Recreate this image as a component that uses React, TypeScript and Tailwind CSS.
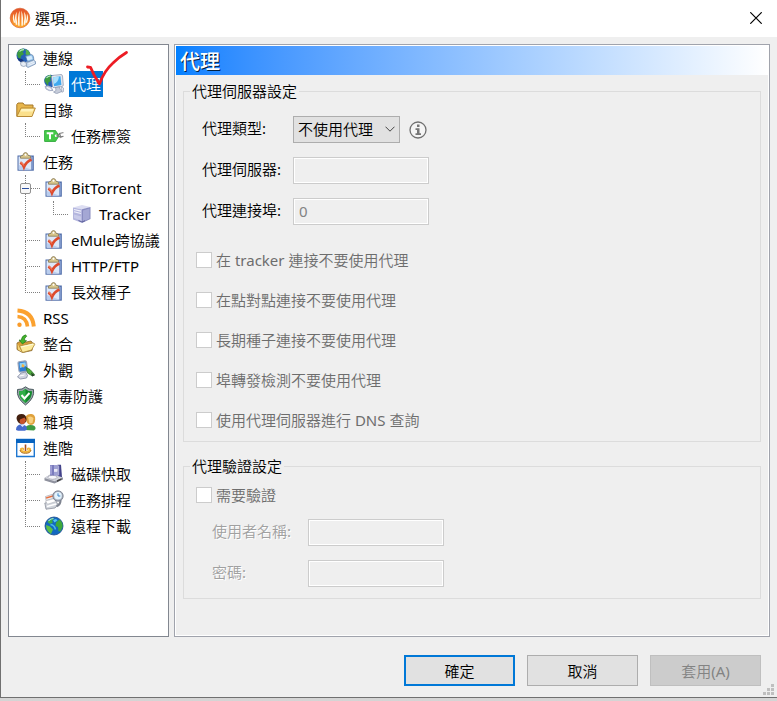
import type { ReactElement, ReactNode } from "react";

const Svg = ({ children }: { children: ReactNode }) => (
  <svg className="block size-5 shrink-0" viewBox="0 0 20 20" aria-hidden="true">
    {children}
  </svg>
);

const NetworkIcon = () => (
  <Svg>
    <circle cx="7.500" cy="7.500" r="7" fill="#2560b8" />
    <path d="M1 6Q2 1 7.500.6L8.500 2 6.500 4 8 6 5 8 4.500 11 2 9.500Z" fill="#3c9b3f" />
    <path d="M9 1q4 1 5.300 5L12 8 9.500 6 10 3.500z" fill="#58b04a" />
    <path d="M3.500 3.500Q5 1.500 8 1.600" stroke="#b8e8c0" strokeWidth="1.200" fill="none" />
    <path d="M1.200 10q2 5 8 4.500L6 11z" fill="#16357c" />
    <path d="M9.500 8l5.500-1.500q2 0 2.500 2.500l.3 3-6 2z" fill="#8fc0ea" stroke="#5c7ea8" strokeWidth=".7" />
    <path d="M10.500 9l5-1.300 1 3.300-5 1.600z" fill="#d3eafb" />
    <path d="M10.500 14.500l7-2.500 2 1.500v2.500l-7.500 3.500-2-1.500z" fill="#c3d6ec" stroke="#6a86ac" strokeWidth=".7" />
    <path d="M12 16l6-2.500M12.500 17.500l6-2.500" stroke="#fff" strokeWidth=".7" />
    <path d="M4.500 14.500q3-2 5.500 0l.5 3q-3 2-5.500 0z" fill="#e6edf6" stroke="#8292aa" strokeWidth=".7" />
  </Svg>
);

const ProxyIcon = () => (
  <Svg>
    <circle cx="6.500" cy="7" r="6.300" fill="#2560b8" />
    <path d="M.6 7Q1 1.500 6.500.8L8 2.500 6 4.500 7 7 4.500 8.500 4 12Z" fill="#3c9b3f" />
    <path d="M2.500 4Q4 2 6.500 1.800" stroke="#b8e8c0" strokeWidth="1.200" fill="none" />
    <path d="M7.500 2.500Q8 1.500 9 1.400L17 .5q1.300 0 1.500 1.500l.8 9q0 1.300-1.300 1.500l-8 1.200q-1.300 0-1.500-1.300z" fill="#e3e6ee" stroke="#8a94ab" strokeWidth=".7" />
    <path d="M9 3.200l7.500-.9.900 8.700-7.400 1.200z" fill="#3fa9ee" />
    <path d="M9 3.200l6-.7q-.5 6-5.300 7.500z" fill="#a9e0fc" />
    <path d="M11.500 13.500l4-.6.8 2.600 2.700 1.500-6.500 2.700-3-1.700 2.500-1.500z" fill="#c6ccda" stroke="#7c89a5" strokeWidth=".6" />
    <path d="M17.500 13l2 1v3.500l-1.500.8z" fill="#eceef4" stroke="#8a94ab" strokeWidth=".6" />
    <path d="M1 12.500q3-1.500 6 .5l2 3.500q-4 1-7-1.500z" fill="#cdd3e4" stroke="#8e98b5" strokeWidth=".7" />
    <path d="M3 13.500l4 2" stroke="#fff" />
  </Svg>
);

const FolderIcon = () => (
  <Svg>
    <path d="M.8 16V4.500L2 3h5l1.500 2H17v3" fill="#e8b64b" stroke="#a5782b" />
    <path d="M.8 16.500L5 8h14.300L16 16.500z" fill="#fbe08b" stroke="#b88a35" />
    <path d="M5.600 9h12l-1 2.500H4.500z" fill="#fff3bd" />
  </Svg>
);

const TagIcon = () => (
  <Svg>
    <path d="M1 4.500h10.500L15 9.800 11.500 15.500H1q-.7 0-.7-.7V5.200q0-.7.700-.7z" fill="#43c848" stroke="#27a432" strokeWidth=".8" />
    <path d="M2.700 7.300h6.600M6 7.300v6" stroke="#fff" strokeWidth="2" />
    <circle cx="12" cy="9.800" r="1.200" fill="#fff" />
    <path d="M12.500 9.800q3.500-3.500 7-3M12.500 10q4 1.500 7 .3M15.500 7l1.500 5" stroke="#7d7d7d" strokeWidth="1.100" fill="none" />
  </Svg>
);

const TaskIcon = () => (
  <Svg>
    <path d="M1.500 3.500h16.300V18.700H1.500z" fill="#4c6aa8" />
    <path d="M2.500 4.500h13V17.700H2.500z" fill="#dde8f9" />
    <path d="M3 13l12 4.500H3z" fill="#b9cdee" />
    <path d="M15.500 4.500l1.500.5v12.500l-1.500.2z" fill="#7f98cb" />
    <path d="M4.500 6.200V4.200l2.500-1q.5-2.700 2.500-2.700t2.500 2.700l2.500 1v2z" fill="#d8c68a" stroke="#857650" strokeWidth=".8" />
    <circle cx="9.500" cy="2.700" r="1" fill="#fff" />
    <path d="M4.300 10.500q2.700 1.500 3.700 4.500 2-5 7.500-7.500" fill="none" stroke="#dd4a2c" strokeWidth="2.600" />
    <path d="M5 10.500q2 1 2.800 3" fill="none" stroke="#ff9a78" strokeWidth=".9" />
  </Svg>
);

const ServerIcon = () => (
  <Svg>
    <path d="M1 3.500L10 1l8.500 2-7.500 2.500z" fill="#dddef2" />
    <path d="M1 3.500l9 1.800V19l-9-3.500z" fill="#b4b6de" />
    <path d="M10 5.300L18.500 3v12L10 19z" fill="#898cc0" />
    <path d="M11 6.500l6.500-2v10L11 17.500z" fill="#a4a7d4" />
    <path d="M2 5.500l7 1.600M2 7.800l7 1.700" stroke="#f0f0fb" strokeWidth="1.100" />
    <path d="M2 10.500l7 2v4L2 14z" fill="#c9cbe9" />
    <path d="M6.500 16.500l3.500 1.500 3-1.300" fill="none" stroke="#5f629c" />
  </Svg>
);

const RssIcon = () => (
  <Svg>
    <circle cx="3.500" cy="16.800" r="2.200" fill="#f99b2a" />
    <path d="M1.500 8.500Q10.500 9 11.500 18.500" fill="none" stroke="#fba12f" strokeWidth="3.600" />
    <path d="M1.500 2.500Q16.500 3.500 17.800 18.500" fill="none" stroke="#fba12f" strokeWidth="4" />
  </Svg>
);

const ImportIcon = () => (
  <Svg>
    <path d="M1 9l4-2 3 1.500 7-1.500 2 2.500-1 7-9.500 2-5.500-3z" fill="#d99f38" stroke="#84642c" strokeWidth=".8" />
    <path d="M1.500 9.500L6 18 2 15.500z" fill="#f7d778" />
    <path d="M3.500 12L17 9q2 .3 1.700 1.500L15.500 16 6.500 18.500z" fill="#fdec9e" stroke="#a9853a" strokeWidth=".8" />
    <path d="M5 13l12-2.800" stroke="#fffbe0" />
    <path d="M9.500.8l1.200 1.400Q8 4 8.500 6.500l2 .2L6.500 10 3 6l2.300.2Q5.500 2 9.500.8z" fill="#44b42c" stroke="#237919" strokeWidth=".7" />
  </Svg>
);

const AppearanceIcon = () => (
  <Svg>
    <path d="M2 3q0-1 1-1.200L9 .8q1.300 0 1.500 1.200l1 8q0 1-1 1.200L4.500 12q-1.300.2-1.500-1z" fill="#2c7bd0" stroke="#99a4ba" strokeWidth="1.200" />
    <path d="M3.500 3.200l6-1 .5 3.800-6 2z" fill="#8ed1f7" />
    <path d="M6 4l2.500 1L8 7.500l-2.500-.7z" fill="#f3b443" />
    <path d="M5 13l4.500-1 2 3.500-1 2.500-6 1-3-2z" fill="#d0d4e0" stroke="#8088a0" strokeWidth=".8" />
    <path d="M3.500 16l5-1" stroke="#fff" />
    <path d="M10 7.500l4 2 4.500 5-2 1.500-5-3z" fill="#4fac3c" stroke="#2d722c" strokeWidth=".8" />
    <path d="M15 12.500l4 3-3 .8z" fill="#28402b" />
  </Svg>
);

const ShieldIcon = () => (
  <Svg>
    <path d="M9.500.8L13 3l4.500.5Q19 12 9.500 19 0 12 1.500 3.500L6 3z" fill="#98a4a8" stroke="#4d5c62" />
    <path d="M9.500 3L12.500 5l3.500.3Q16.500 12 9.500 17 2.500 12 3 5.300L6.500 5z" fill="#128a2c" />
    <path d="M9.500 3v14Q2.500 12 3 5.300L6.500 5z" fill="#2fae48" />
    <path d="M5.500 9l3 3.500L13.500 7" fill="none" stroke="#fff" strokeWidth="2" />
  </Svg>
);

const UsersIcon = () => (
  <Svg>
    <path d="M9 18q0-5 5.500-5t5 4l-1.500 1.500z" fill="#3f9a42" />
    <path d="M10 4q2-2.500 5.500-2 4 .7 3.700 5.500Q19 12.500 15 13q-4-.5-5-5z" fill="#dfa13c" />
    <path d="M12 5q3-1.500 5.500 1l-1 5-3 .5z" fill="#f7d080" />
    <path d="M0 18q0-5.500 5.500-5.500t5.500 5l-2 1.300H2z" fill="#466bcc" />
    <path d="M.5 6Q1 2 5.500 2t5 5q0 4.500-4.500 5Q1 11.500.5 6z" fill="#43200f" />
    <path d="M4 7.500l4.500-2L10 8l-1.500 3.500-3 .7L3.500 10z" fill="#c9542b" />
    <path d="M4.500 13l2 2 2-2" fill="#dbe7ff" />
  </Svg>
);

const AdvancedIcon = () => (
  <Svg>
    <path d="M.7 1.500h17.600v17H.7z" fill="#fff" stroke="#1f77d0" strokeWidth="1.400" />
    <path d="M0 1h19v4H0z" fill="#0863bf" />
    <path d="M4 10.500q2-1.500 4-.5v3h3v-3q2-1 4 .5 1 4.500-5.500 4.500T4 10.500z" fill="#f2b53c" />
    <path d="M4 12q.5 3.300 5.500 3.300T15 12" fill="none" stroke="#b06f1e" />
    <path d="M9.500 6.500v6.500" stroke="#a64e1d" strokeWidth="1.600" />
    <path d="M6.500 11.500l1 1.500M12.500 11.500l-1 1.500" stroke="#fff4bb" />
  </Svg>
);

const DiskIcon = () => (
  <Svg>
    <path d="M.5 14L7 10l12 3.500v2L10.500 19.500.5 16.500z" fill="#8f929e" />
    <path d="M.5 14L7 10l12 3.500-8.500 3.700z" fill="#d4d6de" />
    <ellipse cx="8.500" cy="13.300" rx="4.500" ry="2" fill="#f7f7fb" stroke="#90929f" strokeWidth=".6" />
    <path d="M6 1h4v10.500H6z" fill="#7a7bbd" />
    <path d="M13.500.7H17l1 12.600-4.500-1.500z" fill="#43438a" />
    <path d="M10 1h3.500v4H10zM10 7.500h3.500v4.300H10z" fill="#9fa1d4" />
    <path d="M10 5h3.500v2.500H10z" fill="#e8e8f6" />
    <path d="M7 1.500v9M14.700 1.500v10" stroke="#c4c4ec" />
    <path d="M13 16.300l4.500-2v1.500l-4.500 2.200z" fill="#444" />
  </Svg>
);

const ScheduleIcon = () => (
  <Svg>
    <path d="M1.500 6.500l8-2.500 1 4-8.500 2.500z" fill="#f0f0f3" stroke="#a7a8b0" strokeWidth=".7" />
    <path d="M2 7.300l7.500-2.300.3 1.500L2.300 8.800z" fill="#e8703f" />
    <path d="M.8 13l10.700-2.500L14 14.500l-3 3.500-9 1.200z" fill="#d0d4db" stroke="#7f8490" strokeWidth=".7" />
    <path d="M1.500 11l9-2.500 1.500 3-8.500 2.700z" fill="#fff" stroke="#b0b3bb" strokeWidth=".6" />
    <path d="M3 16.500l9-2.500" stroke="#fff" strokeWidth="1.400" />
    <path d="M16.500 10q.5 4-4 6.500" fill="none" stroke="#7f8490" strokeWidth="2" />
    <circle cx="14" cy="6" r="5.200" fill="#a4abb8" stroke="#737b8b" strokeWidth=".8" />
    <circle cx="14" cy="5.700" r="3.800" fill="#e4f3fd" />
    <path d="M14 3.300v2.700h2.300" fill="none" stroke="#3b86c6" />
  </Svg>
);

const EarthIcon = () => (
  <Svg>
    <circle cx="10" cy="10" r="9" fill="#1268c0" stroke="#164a8a" strokeWidth=".8" />
    <path d="M3.500 6Q6 1.800 10 2l-2 3 1 1.500L6 8z" fill="#3fae47" />
    <path d="M12 6.500l3.500-3Q19 6 18.500 11L16.500 15l-2 .5L14 11l-2.500-1z" fill="#3ea93c" />
    <path d="M2 9l4 1.500 3 3-2 4.500Q2 15 2 9z" fill="#5cc045" />
    <path d="M9 4l3-1 1.500 1.500-3 2z" fill="#52c6ef" />
    <path d="M6.500 8.500q4 .5 5 5" fill="none" stroke="#47b8ea" strokeWidth="1.500" />
    <path d="M4.500 5Q6.500 2.500 9.500 2.500" fill="none" stroke="#a6e2ee" strokeWidth="1.200" />
  </Svg>
);

/* Connector cells left of a row: "end" closes a branch, "tee" continues it, "bar" passes by. */
type Guide = "end" | "tee" | "bar" | "toggle" | "none";

const GuideCell = ({ kind }: { kind: Guide }) => (
  <span className="relative flex h-full w-7 shrink-0 flex-col pl-[9px]">
    {kind !== "none" && (
      <>
        <span
          className={
            kind === "bar"
              ? "h-[13px] w-[15px] border-l border-dotted border-[#808080]"
              : "h-[14px] w-[15px] border-b border-l border-dotted border-[#808080]"
          }
        />
        {kind !== "end" && <span className="w-[15px] grow border-l border-dotted border-[#808080]" />}
      </>
    )}
    {kind === "toggle" && (
      <span className="absolute top-2 left-1 flex size-[11px] items-center justify-center rounded-[2px] border border-[#919191] bg-[#f8f8f8]">
        <span className="h-px w-[7px] bg-[#2b4fa0]" />
      </span>
    )}
  </span>
);

type Row = { label: string; icon: () => ReactElement; guides?: Guide[]; selected?: boolean };

const rows: Row[] = [
  { label: "連線", icon: NetworkIcon },
  { label: "代理", icon: ProxyIcon, guides: ["end"], selected: true },
  { label: "目錄", icon: FolderIcon },
  { label: "任務標簽", icon: TagIcon, guides: ["end"] },
  { label: "任務", icon: TaskIcon },
  { label: "BitTorrent", icon: TaskIcon, guides: ["toggle"] },
  { label: "Tracker", icon: ServerIcon, guides: ["bar", "end"] },
  { label: "eMule跨協議", icon: TaskIcon, guides: ["tee"] },
  { label: "HTTP/FTP", icon: TaskIcon, guides: ["tee"] },
  { label: "長效種子", icon: TaskIcon, guides: ["end"] },
  { label: "RSS", icon: RssIcon },
  { label: "整合", icon: ImportIcon },
  { label: "外觀", icon: AppearanceIcon },
  { label: "病毒防護", icon: ShieldIcon },
  { label: "雜項", icon: UsersIcon },
  { label: "進階", icon: AdvancedIcon },
  { label: "磁碟快取", icon: DiskIcon, guides: ["tee"] },
  { label: "任務排程", icon: ScheduleIcon, guides: ["tee"] },
  { label: "遠程下載", icon: EarthIcon, guides: ["end"] },
];

const TreeRow = ({ label, icon: Icon, guides = [], selected }: Row) => (
  <li className="flex h-[26px] items-center">
    {guides.map((kind, i) => (
      <GuideCell key={i} kind={kind} />
    ))}
    <button type="button" className="flex h-full items-center gap-[5px] whitespace-nowrap">
      <Icon />
      <span className={selected ? "bg-[#0078d7] px-0.5 leading-[26px] text-white" : "px-0.5 leading-[26px]"}>
        {label}
      </span>
    </button>
  </li>
);

const Group = ({ title, children }: { title: string; children: ReactNode }) => (
  <fieldset className="min-w-0 border border-[#dcdcdc] pr-3 pb-[11px] pl-3">
    <legend className="-ml-1.5 px-0.5 leading-5">{title}</legend>
    {children}
  </fieldset>
);

const Check = ({ id, label }: { id: string; label: string }) => (
  <div className="flex h-5 items-center gap-1">
    <input id={id} type="checkbox" disabled className="size-4 shrink-0 appearance-none border border-[#cccccc] bg-white" />
    <label htmlFor={id} className="leading-5 text-[#6d6d6d]">
      {label}
    </label>
  </div>
);

const fieldClass =
  "h-[27px] w-[136px] border border-[#cccccc] bg-[#efefef] px-[5px] pb-0.5 text-[#838383] shadow-[inset_0_0_0_1px_#ffffff]";

const checks = [
  { id: "no-tracker", label: "在 tracker 連接不要使用代理" },
  { id: "no-peer", label: "在點對點連接不要使用代理" },
  { id: "no-seed", label: "長期種子連接不要使用代理" },
  { id: "no-port", label: "埠轉發檢測不要使用代理" },
  { id: "dns", label: "使用代理伺服器進行 DNS 查詢" },
];

export default function App() {
  return (
    <div className="flex min-h-screen flex-col bg-gradient-to-b from-[#b5b5b5] to-[#d5d5d5] pb-[3px] font-['Noto_Sans','Noto_Sans_CJK_TC_DemiLight','Noto_Sans_CJK_TC',sans-serif] text-[15px] leading-5 text-black">
      <div className="flex grow flex-col border-b border-l border-[#707070] bg-[#efefef]">
        <header className="flex h-[37px] items-center bg-white pr-[15px] pb-0.5 pl-2">
          <svg className="size-[22px] shrink-0" viewBox="0 0 22 22" aria-hidden="true">
            <defs>
              <linearGradient id="logo" x1="0" y1="0" x2="0" y2="1">
                <stop offset="0" stopColor="#e2502a" />
                <stop offset=".6" stopColor="#f5822a" />
                <stop offset="1" stopColor="#ffb02c" />
              </linearGradient>
            </defs>
            <circle cx="11" cy="11" r="9.800" fill="url(#logo)" stroke="#d9622f" strokeWidth=".7" />
            <path
              d="M10.600 3.500Q8.200 10 9.200 18.800h1.400zM12.400 3.500q2.400 6.500 1.400 15.300h-1.400zM7.800 4.800Q4.800 10 6.800 17.800h1.600Q7 11 7.800 4.800zM15.200 4.800q3 5.200 1 13h-1.600q1.400-6.800.6-13zM4.900 6.800Q2.800 10.500 4.900 15.800h1.400Q4.700 11 4.900 6.800zM18 6.800q2.100 3.700 0 9h-1.400Q18.200 11 18 6.800z"
              fill="#fff6e4"
            />
          </svg>
          <h1 className="ml-1 grow">選項...</h1>
          <button type="button" aria-label="關閉">
            <svg className="block size-3" viewBox="0 0 12 12">
              <path d="M.3.3l11.400 11.400M11.700.3L.3 11.700" stroke="#000" strokeWidth="1.200" />
            </svg>
          </button>
        </header>

        <main className="flex grow gap-[5px] pt-[7px] pr-[7px] pl-[7px]">
          <nav className="relative w-[161px] shrink-0 border border-[#828790] bg-white pl-[7px]">
            <ul>
              {rows.map((row) => (
                <TreeRow key={row.label} {...row} />
              ))}
            </ul>
            <svg className="pointer-events-none absolute top-[5px] left-[76px] h-9 w-[44px]" viewBox="0 0 44 36" aria-hidden="true">
              <path
                d="M2.500 17l3 .3q3.500 9 9 16.500Q19 21 28 13q6-6 13.500-10.500"
                fill="none"
                stroke="#ed1c24"
                strokeWidth="2.800"
                strokeLinecap="round"
                strokeLinejoin="round"
              />
            </svg>
          </nav>

          <section className="min-w-0 grow border border-[#a0a3ac] shadow-[inset_0_0_0_1px_#ffffff]">
            <div className="p-px">
              <h2 className="flex h-[29px] items-center bg-gradient-to-r from-[#0080ff] to-white pl-1 font-['Noto_Sans_CJK_TC',sans-serif] text-[20px] font-medium text-white [text-shadow:1px_1px_0_#002040]">
                代理
              </h2>
              <div className="flex flex-col gap-3.5 px-[7px] pt-1.5">
                <Group title="代理伺服器設定">
                  <div className="flex flex-col gap-3.5 pt-[15px] pl-1.5">
                    <div className="flex items-center">
                      <label htmlFor="type" className="w-[91px] pb-1">
                        代理類型:
                      </label>
                      <span className="relative">
                        <select
                          id="type"
                          className="block h-[27px] w-[107px] appearance-none border border-[#adadad] bg-[#e1e1e1] pb-0.5 pl-1"
                        >
                          <option>不使用代理</option>
                        </select>
                        <svg className="pointer-events-none absolute top-2.5 right-[5px] h-1.5 w-2.5" viewBox="0 0 10 6">
                          <path d="M.5.7L5 5.200 9.500.7" fill="none" stroke="#444" />
                        </svg>
                      </span>
                      <svg className="ml-[9px] size-[18px]" viewBox="0 0 18 18" aria-hidden="true">
                        <circle cx="9" cy="9" r="8" fill="#f5f5f5" stroke="#707070" strokeWidth="1.300" />
                        <path d="M8 3.500h2.500V6H8zM6.500 7.300h4v5H12V14H6.500v-1.700H8V9H6.500z" fill="#777" />
                      </svg>
                    </div>
                    <div className="flex items-center">
                      <label htmlFor="host" className="w-[91px] pb-1">
                        代理伺服器:
                      </label>
                      <input id="host" disabled className={fieldClass} />
                    </div>
                    <div className="flex items-center">
                      <label htmlFor="port" className="w-[91px] pb-1">
                        代理連接埠:
                      </label>
                      <input id="port" disabled defaultValue="0" className={fieldClass} />
                    </div>
                  </div>
                  <div className="flex flex-col gap-5 pt-[25px]">
                    {checks.map((c) => (
                      <Check key={c.id} {...c} />
                    ))}
                  </div>
                </Group>

                <Group title="代理驗證設定">
                  <div className="pt-[9px]">
                    <Check id="auth" label="需要驗證" />
                  </div>
                  <div className="flex flex-col gap-3.5 pt-3.5 pl-4 text-[#a0a0a0] [text-shadow:1px_1px_0_#ffffff]">
                    <div className="flex items-center">
                      <label htmlFor="user" className="w-24 pb-1">
                        使用者名稱:
                      </label>
                      <input id="user" disabled className={fieldClass} />
                    </div>
                    <div className="flex items-center">
                      <label htmlFor="pass" className="w-24 pb-1">
                        密碼:
                      </label>
                      <input id="pass" type="password" disabled className={fieldClass} />
                    </div>
                  </div>
                </Group>
              </div>
            </div>
          </section>
        </main>

        <footer className="relative flex h-[60px] shrink-0 items-start justify-end gap-3 pt-[18px] pr-4">
          <button type="button" className="h-[31px] w-[111px] border-2 border-[#0078d7] bg-[#e1e1e1]">
            確定
          </button>
          <button type="button" className="h-[31px] w-[111px] border border-[#adadad] bg-[#e1e1e1]">
            取消
          </button>
          <button type="button" disabled className="h-[31px] w-[111px] border border-[#bfbfbf] bg-[#cccccc] text-[#838383]">
            套用(A)
          </button>
          <svg className="absolute right-[3px] bottom-0.5 size-[11px]" viewBox="0 0 11 11" aria-hidden="true">
            <path d="M8 0h3v3H8zM4 4h3v3H4zM8 4h3v3H8zM0 8h3v3H0zM4 8h3v3H4zM8 8h3v3H8z" fill="#bfbfbf" />
          </svg>
        </footer>
      </div>
    </div>
  );
}
